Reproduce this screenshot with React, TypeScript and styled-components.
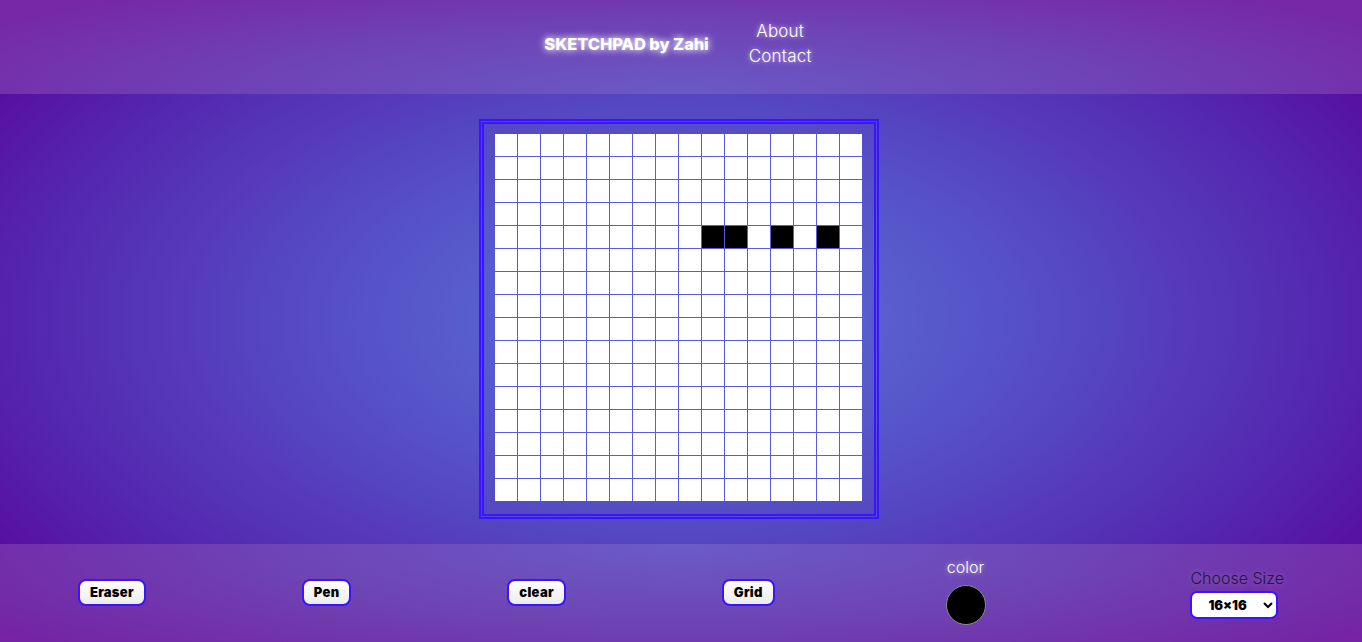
import React from "react";
import styled, { createGlobalStyle } from "styled-components";

const GlobalStyle = createGlobalStyle`
    html, body {
        margin: 0;
        padding: 0;
        height: 100%;
        overflow: hidden;
    }
    body {
        font-family: "Inter", "Liberation Sans", sans-serif;
    }
`;

const SIZE = 16;
const painted = new Set(["4-9", "4-10", "4-12", "4-14"]);

export default function App() {
    const cells = [];
    for (let r = 0; r < SIZE; r++) {
        for (let c = 0; c < SIZE; c++) {
            cells.push(<Cell key={`${r}-${c}`} $filled={painted.has(`${r}-${c}`)} />);
        }
    }

    return (
        <Page>
            <GlobalStyle />
            <Header>
                <Title>SKETCHPAD by Zahi</Title>
                <Nav>
                    <NavLink>About</NavLink>
                    <NavLink>Contact</NavLink>
                </Nav>
            </Header>
            <Main>
                <Board>
                    <Grid>{cells}</Grid>
                </Board>
            </Main>
            <Footer>
                <ToolButton>Eraser</ToolButton>
                <ToolButton>Pen</ToolButton>
                <ToolButton>clear</ToolButton>
                <ToolButton>Grid</ToolButton>
                <ColorGroup>
                    <ColorLabel>color</ColorLabel>
                    <Swatch />
                </ColorGroup>
                <SizeGroup>
                    <SizeLabel>Choose Size</SizeLabel>
                    <SizeSelect defaultValue="16">
                        <option value="16">16x16</option>
                        <option value="32">32x32</option>
                        <option value="64">64x64</option>
                    </SizeSelect>
                </SizeGroup>
            </Footer>
        </Page>
    );
}

const Page = styled.div`
    width: 100%;
    height: 642px;
    display: flex;
    flex-direction: column;
`;

const Header = styled.header`
    height: 94px;
    box-sizing: border-box;
    flex-shrink: 0;
    display: flex;
    justify-content: center;
    align-items: center;
    gap: 40px;
    padding: 0 6px 7px 0;
    background: radial-gradient(ellipse 60% 140% at 50% 100%, #6a5ac6 0%, #6e44b6 50%, #7628a6 100%);
`;

const Title = styled.h1`
    margin: 0;
    font-size: 16.5px;
    font-weight: 800;
    color: #ffffff;
    letter-spacing: -0.1px;
    text-shadow: 0 0 6px rgba(255, 255, 255, 0.9), 0 0 10px rgba(255, 255, 255, 0.5);
`;

const Nav = styled.nav`
    display: flex;
    flex-direction: column;
    align-items: center;
    gap: 3px;
`;

const NavLink = styled.a`
    font-size: 17px;
    font-weight: 300;
    color: #ffffff;
    letter-spacing: 0.2px;
    line-height: 22px;
    text-shadow: 0 0 5px rgba(255, 255, 255, 0.7);
`;

const Main = styled.main`
    height: 450px;
    flex-shrink: 0;
    display: flex;
    justify-content: center;
    align-items: flex-start;
    padding: 25px 4px 0 0;
    box-sizing: border-box;
    background: radial-gradient(ellipse 62% 100% at 50% 50%, #5b74da 0%, #5650c6 40%, #5426b0 78%, #58089e 100%);
`;

const Board = styled.div`
    width: 400px;
    height: 400px;
    box-sizing: border-box;
    border: 5px double #3a14ff;
    padding: 10px 12px 13px 11px;
    background: rgba(90, 80, 200, 0.15);
`;

const Grid = styled.div`
    width: 367px;
    height: 367px;
    display: grid;
    grid-template-columns: repeat(${SIZE}, 22px);
    grid-template-rows: repeat(${SIZE}, 22px);
    gap: 1px;
    background: #5a5ae0;
`;

const Cell = styled.div<{ $filled: boolean }>`
    background: ${p => (p.$filled ? "#000000" : "#ffffff")};
`;

const Footer = styled.footer`
    flex: 1;
    display: flex;
    justify-content: space-around;
    align-items: center;
    background: radial-gradient(ellipse 60% 160% at 50% 0%, #6b5cc6 0%, #6e44b4 50%, #7424a4 100%);
`;

const ToolButton = styled.button`
    font-family: "Inter", "Liberation Sans", sans-serif;
    font-size: 13px;
    font-weight: 900;
    letter-spacing: 0.3px;
    color: #000000;
    background: linear-gradient(#ffffff, #ececec);
    border: 2px solid #3a14ff;
    border-radius: 8px;
    height: 27px;
    padding: 0 10px;
    margin-top: -2px;
`;

const ColorGroup = styled.div`
    width: 89px;
    padding-left: 15px;
    display: flex;
    flex-direction: column;
    align-items: flex-start;
    gap: 8px;
    margin-top: -4px;
`;

const ColorLabel = styled.span`
    width: 40px;
    text-align: center;
    font-size: 16px;
    font-weight: 300;
    color: #ffffff;
    text-shadow: 0 0 5px rgba(255, 255, 255, 0.7);
`;

const Swatch = styled.div`
    width: 38px;
    height: 38px;
    border-radius: 50%;
    background: #000000;
    border: 1px solid #8a8a8a;
`;

const SizeGroup = styled.div`
    display: flex;
    flex-direction: column;
    align-items: flex-start;
    gap: 3px;
`;

const SizeLabel = styled.span`
    font-size: 16px;
    font-weight: 300;
    color: #24163e;
    text-shadow: 0 0 6px rgba(255, 255, 255, 0.25);
`;

const SizeSelect = styled.select`
    font-family: "Inter", "Liberation Sans", sans-serif;
    font-size: 13px;
    font-weight: 900;
    width: 88px;
    height: 28px;
    padding: 0 6px 0 12px;
    border: 2px solid #3a14ff;
    border-radius: 7px;
    background: #ffffff;
    color: #000000;
`;
